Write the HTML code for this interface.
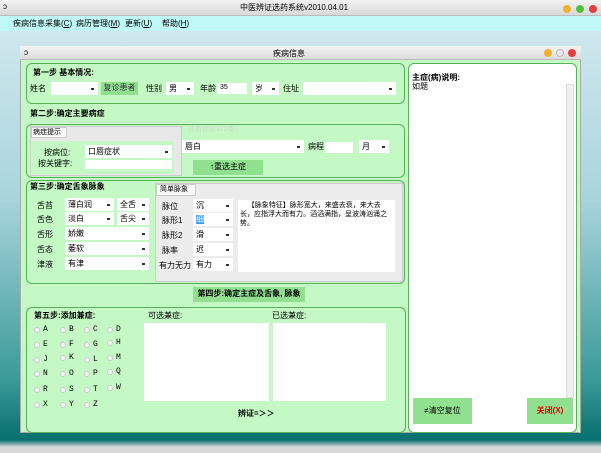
<html><head><style>
*{box-sizing:border-box;margin:0;padding:0}
body{width:601px;height:453px;position:relative;overflow:hidden;font-family:"Liberation Sans","Noto Sans CJK SC",sans-serif;font-size:8px;line-height:10px;color:#000;background:linear-gradient(180deg,#cfe8ee 30px,#a8d4dc 200px,#3a9a98 380px,#08706e 440px,#d8d8d8 447px)}
.a{position:absolute}
.t{position:absolute;white-space:nowrap;font-size:8px;line-height:10px}
.b{font-weight:bold}
.p{position:absolute;border:1px solid #58b058;border-radius:6px}
.cb{position:absolute;background:#fff;height:13px;font-size:8px;line-height:11px;padding:1px 3px;white-space:nowrap}
.cb:after{content:"";position:absolute;right:4px;top:6px;width:3px;height:2px;background:#333}
.in{position:absolute;background:#fff;height:11px;font-size:7px;line-height:9px;padding:0 3px}
.btn{position:absolute;background:#90e090;text-align:center;font-size:8px;white-space:nowrap}
.r{position:absolute;width:6px;height:6px;border-radius:50%;background:#f4f4f4;border:1px solid #ccc}
</style></head><body>
<div class="a" style="left:0;top:0;width:601px;height:16px;background:linear-gradient(#f2f2f2,#d9d9d9);border-bottom:1px solid #bbb"></div>
<div class="t" style="left:3px;top:2px">ↄ</div>
<div class="t" style="left:240px;top:3px">中医辨证选药系统v2010.04.01</div>
<div class="a" style="left:563px;top:5px;width:8px;height:8px;border-radius:50%;background:#f0b030"></div>
<div class="a" style="left:576px;top:5px;width:8px;height:8px;border-radius:50%;background:#50c040"></div>
<div class="a" style="left:589px;top:5px;width:8px;height:8px;border-radius:50%;background:#e04040"></div>
<div class="a" style="left:0;top:16px;width:601px;height:15px;background:#c0f8f8"></div>
<div class="t" style="left:13px;top:19px">疾病信息采集(<u>C</u>)</div>
<div class="t" style="left:76px;top:19px">病历管理(<u>M</u>)</div>
<div class="t" style="left:125px;top:19px">更新(<u>U</u>)</div>
<div class="t" style="left:162px;top:19px">帮助(<u>H</u>)</div>
<div class="a" style="left:20px;top:46px;width:561px;height:387px;background:#c4f8c4;border:1px solid #aaa"></div>
<div class="a" style="left:20px;top:46px;width:561px;height:14px;background:linear-gradient(#f4f4f4,#dcdcdc);border-bottom:1px solid #bbb"></div>
<div class="t" style="left:24px;top:48px">ↄ</div>
<div class="t" style="left:273px;top:49px">疾病信息</div>
<div class="a" style="left:544px;top:49px;width:8px;height:8px;border-radius:50%;background:#f0b030"></div>
<div class="a" style="left:556px;top:49px;width:8px;height:8px;border-radius:50%;background:#e8e8e8;border:1px solid #bbb"></div>
<div class="a" style="left:568px;top:49px;width:8px;height:8px;border-radius:50%;background:#e04040"></div>

<div class="p" style="left:26px;top:63px;width:379px;height:41px"></div>
<div class="t b" style="left:33px;top:68px">第一步 基本情况:</div>
<div class="t" style="left:30px;top:84px">姓名</div>
<div class="cb" style="left:51px;top:82px;width:47px"></div>
<div class="btn" style="left:101px;top:82px;width:37px;height:13px;padding-top:1px;color:#333">复诊患者</div>
<div class="t" style="left:146px;top:84px">性别</div>
<div class="cb" style="left:166px;top:82px;width:28px">男</div>
<div class="t" style="left:200px;top:84px">年龄</div>
<div class="in" style="left:217px;top:83px;width:30px">35</div>
<div class="cb" style="left:252px;top:82px;width:27px">岁</div>
<div class="t" style="left:283px;top:84px">住址</div>
<div class="cb" style="left:303px;top:82px;width:93px"></div>

<div class="t b" style="left:30px;top:109px">第二步:确定主要病症</div>
<div class="p" style="left:26px;top:124px;width:379px;height:54px"></div>
<div class="a" style="left:30px;top:126px;width:152px;height:50px;background:#e8e8e8;border:1px solid #ccc"></div>
<div class="a" style="left:31px;top:127px;width:36px;height:11px;background:#f6f6f6;border:1px solid #ccc"></div>
<div class="t" style="left:33px;top:128px;font-size:7px;line-height:9px">病症提示</div>
<div class="a" style="left:32px;top:141px;width:142px;height:33px;background:#c4f8c4"></div>
<div class="t" style="left:44px;top:148px">按病位:</div>
<div class="cb" style="left:85px;top:145px;width:87px">口唇症状</div>
<div class="t" style="left:38px;top:159px">按关键字:</div>
<div class="in" style="left:85px;top:160px;width:87px;height:9px"></div>
<div class="t" style="left:188px;top:125px;color:#c8dcc8;font-size:7px">共有症状372条↓</div>
<div class="cb" style="left:182px;top:140px;width:122px">唇白</div>
<div class="t" style="left:308px;top:142px">病程</div>
<div class="in" style="left:325px;top:142px;width:28px"></div>
<div class="cb" style="left:359px;top:140px;width:30px">月</div>
<div class="btn" style="left:193px;top:160px;width:70px;height:15px;padding-top:2px">↑重选主症</div>

<div class="p" style="left:26px;top:180px;width:379px;height:104px"></div>
<div class="t b" style="left:30px;top:182px">第三步:确定舌象脉象</div>
<div class="t" style="left:37px;top:201px">舌苔</div><div class="cb" style="left:65px;top:198px;width:49px">薄白润</div><div class="cb" style="left:117px;top:198px;width:32px">全舌</div>
<div class="t" style="left:37px;top:215px">舌色</div><div class="cb" style="left:65px;top:212px;width:49px">淡白</div><div class="cb" style="left:117px;top:212px;width:32px">舌尖</div>
<div class="t" style="left:37px;top:230px">舌形</div><div class="cb" style="left:65px;top:227px;width:84px">娇嫩</div>
<div class="t" style="left:37px;top:245px">舌态</div><div class="cb" style="left:65px;top:242px;width:84px">萎软</div>
<div class="t" style="left:37px;top:260px">津液</div><div class="cb" style="left:65px;top:257px;width:84px">有津</div>
<div class="a" style="left:155px;top:183px;width:248px;height:99px;background:#ececec;border:1px solid #ccc"></div>
<div class="a" style="left:156px;top:184px;width:40px;height:12px;background:#f8f8f8;border:1px solid #ccc"></div>
<div class="t" style="left:160px;top:185px;font-size:7px">简单脉象</div>
<div class="t" style="left:162px;top:202px">脉位</div><div class="cb" style="left:193px;top:199px;width:40px">沉</div>
<div class="t" style="left:162px;top:216px">脉形1</div><div class="cb" style="left:193px;top:213px;width:40px"><span style="background:#39f;color:#fff">细</span></div>
<div class="t" style="left:162px;top:231px">脉形2</div><div class="cb" style="left:193px;top:228px;width:40px">滑</div>
<div class="t" style="left:162px;top:246px">脉率</div><div class="cb" style="left:193px;top:243px;width:40px">迟</div>
<div class="t" style="left:159px;top:261px">有力无力</div><div class="cb" style="left:193px;top:258px;width:40px">有力</div>
<div class="a" style="left:238px;top:200px;width:157px;height:72px;background:#fff;font-size:7px;padding:1px 2px;line-height:9px">&nbsp;&nbsp;&nbsp;&nbsp;【脉象特征】脉形宽大，来盛去衰，来大去长，应指浮大而有力。滔滔满指，呈波涛汹涌之势。</div>

<div class="btn b" style="left:193px;top:287px;width:112px;height:15px;padding-top:2px">第四步:确定主症及舌象, 脉象</div>

<div class="p" style="left:26px;top:307px;width:380px;height:126px"></div>
<div class="t b" style="left:34px;top:311px">第五步:添加兼症:</div>
<div class="t" style="left:148px;top:311px">可选兼症:</div>
<div class="t" style="left:272px;top:311px">已选兼症:</div>
<div class="a" style="left:144px;top:323px;width:125px;height:78px;background:#fff"></div>
<div class="a" style="left:273px;top:323px;width:113px;height:78px;background:#fff"></div>
<div class="t b" style="left:238px;top:409px">辨证=＞＞</div>
<div style="font-family:'Liberation Mono',monospace">
<div class="r" style="left:34px;top:327px"></div><div class="t" style="left:43px;top:325px">A</div>
<div class="r" style="left:60px;top:327px"></div><div class="t" style="left:69px;top:325px">B</div>
<div class="r" style="left:84px;top:327px"></div><div class="t" style="left:93px;top:325px">C</div>
<div class="r" style="left:107px;top:327px"></div><div class="t" style="left:116px;top:325px">D</div>
<div class="r" style="left:34px;top:342px"></div><div class="t" style="left:43px;top:340px">E</div>
<div class="r" style="left:60px;top:342px"></div><div class="t" style="left:69px;top:340px">F</div>
<div class="r" style="left:84px;top:342px"></div><div class="t" style="left:93px;top:340px">G</div>
<div class="r" style="left:107px;top:340px"></div><div class="t" style="left:116px;top:338px">H</div>
<div class="r" style="left:34px;top:357px"></div><div class="t" style="left:43px;top:355px">J</div>
<div class="r" style="left:60px;top:355px"></div><div class="t" style="left:69px;top:353px">K</div>
<div class="r" style="left:84px;top:357px"></div><div class="t" style="left:93px;top:355px">L</div>
<div class="r" style="left:107px;top:355px"></div><div class="t" style="left:116px;top:353px">M</div>
<div class="r" style="left:34px;top:371px"></div><div class="t" style="left:43px;top:369px">N</div>
<div class="r" style="left:60px;top:371px"></div><div class="t" style="left:69px;top:369px">O</div>
<div class="r" style="left:84px;top:371px"></div><div class="t" style="left:93px;top:369px">P</div>
<div class="r" style="left:107px;top:369px"></div><div class="t" style="left:116px;top:367px">Q</div>
<div class="r" style="left:34px;top:387px"></div><div class="t" style="left:43px;top:385px">R</div>
<div class="r" style="left:60px;top:387px"></div><div class="t" style="left:69px;top:385px">S</div>
<div class="r" style="left:84px;top:387px"></div><div class="t" style="left:93px;top:385px">T</div>
<div class="r" style="left:107px;top:385px"></div><div class="t" style="left:116px;top:383px">W</div>
<div class="r" style="left:34px;top:402px"></div><div class="t" style="left:43px;top:400px">X</div>
<div class="r" style="left:60px;top:402px"></div><div class="t" style="left:69px;top:400px">Y</div>
<div class="r" style="left:84px;top:402px"></div><div class="t" style="left:93px;top:400px">Z</div>
</div>

<div class="p" style="left:408px;top:63px;width:169px;height:370px;background:#fff;border-color:#58b058"></div>
<div class="t b" style="left:412px;top:73px">主症(病)说明:</div>
<div class="t" style="left:412px;top:82px">如题</div>
<div class="a" style="left:566px;top:84px;width:8px;height:314px;background:#f0f0f0;border:1px solid #ddd"></div>
<div class="btn" style="left:413px;top:398px;width:59px;height:26px;padding-top:8px">≠清空复位</div>
<div class="btn b" style="left:527px;top:398px;width:46px;height:26px;padding-top:8px;color:#e00000">关闭(X)</div>
</body></html>
